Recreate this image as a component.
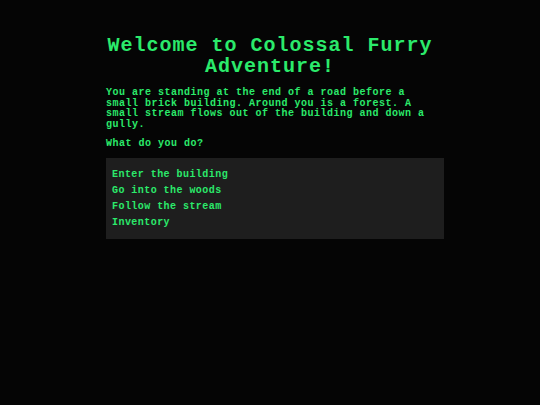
const options = ["Enter the building", "Go into the woods", "Follow the stream", "Inventory"]

export default function App() {
  return (
    <div className="min-h-screen w-full bg-[#050505] text-[#2bea6b] font-['Liberation_Mono',monospace] font-bold">
      <div className="mx-auto w-[348px] pt-[35px]">
        <h1 className="text-center text-[20px] leading-[21px] tracking-[1px]">
          Welcome to Colossal Furry Adventure!
        </h1>
        <div className="pl-[10px] pt-[11px]">
          <p className="text-[10px] leading-[10.5px] tracking-[0.5px]">
            You are standing at the end of a road before a small brick building. Around you is a forest. A small
            stream flows out of the building and down a gully.
          </p>
          <p className="mt-[9px] text-[10px] leading-[10.5px] tracking-[0.5px]">What do you do?</p>
          <div className="mt-[8px] bg-[#1e1e1e] px-[6px] pt-[9px] pb-[8px]">
            {options.map((o) => (
              <div key={o} className="text-[10px] leading-[16px] tracking-[0.45px]">
                {o}
              </div>
            ))}
          </div>
        </div>
      </div>
    </div>
  )
}
